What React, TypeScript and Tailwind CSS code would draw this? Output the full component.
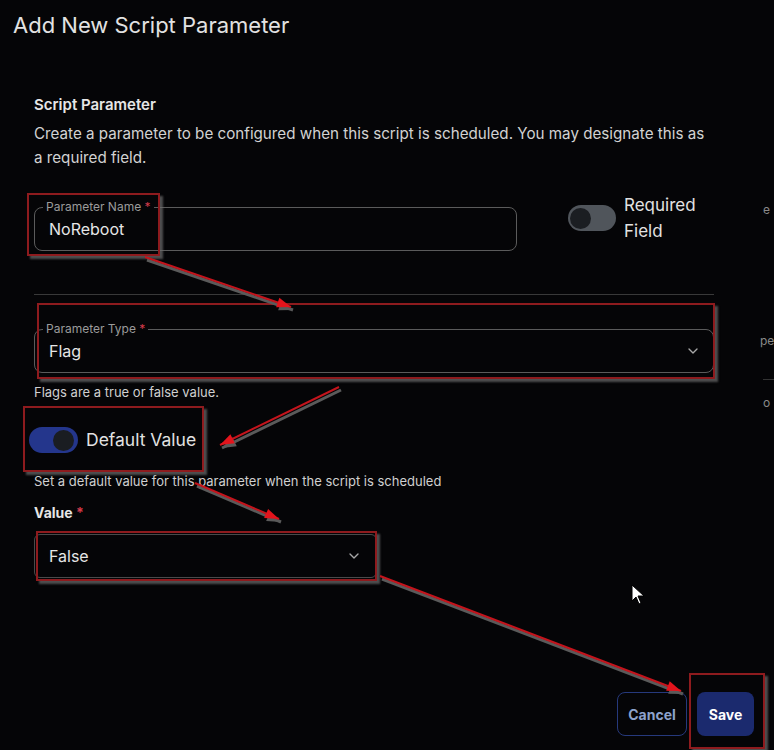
import { ChevronDown } from 'lucide-react';

type Pt = [number, number];

// annotation arrows drawn over the form: [tail, tip]
const ARROWS: [Pt, Pt][] = [
  [[145, 257], [291, 307]],
  [[339, 387], [220, 445]],
  [[195, 483], [279, 519]],
  [[380, 576], [681, 691]],
];

// annotation boxes: x, y, w, h
const BOXES = [
  { x: 27, y: 193, w: 133, h: 63 },
  { x: 37, y: 303, w: 678, h: 76 },
  { x: 23, y: 406, w: 181, h: 66 },
  { x: 36, y: 531, w: 341, h: 50 },
  { x: 689, y: 673, w: 76, h: 76 },
];

function head(tail: Pt, tip: Pt, len = 14, half = 5) {
  const dx = tip[0] - tail[0];
  const dy = tip[1] - tail[1];
  const d = Math.hypot(dx, dy);
  const ux = dx / d;
  const uy = dy / d;
  const bx = tip[0] - ux * len;
  const by = tip[1] - uy * len;
  return `${tip[0]},${tip[1]} ${bx - uy * half},${by + ux * half} ${bx + uy * half},${by - ux * half}`;
}

function Annotations() {
  return (
    <>
      {BOXES.map((b, i) => (
        <div
          key={i}
          className="pointer-events-none absolute border-2 border-[#8e1b1e] shadow-[3px_3px_2px_rgba(110,110,110,0.7)]"
          style={{ left: b.x, top: b.y, width: b.w, height: b.h }}
        />
      ))}
      <svg className="pointer-events-none absolute left-0 top-0" width={774} height={750}>
        {ARROWS.map(([a, b], i) => (
          <g key={i}>
            <line x1={a[0] + 2} y1={a[1] + 3} x2={b[0] + 2} y2={b[1] + 3} stroke="#5a5a5a" strokeWidth={3} />
            <polygon points={head([a[0] + 2, a[1] + 3], [b[0] + 2, b[1] + 3])} fill="#5a5a5a" />
            <line x1={a[0]} y1={a[1]} x2={b[0]} y2={b[1]} stroke="#c4141c" strokeWidth={2} />
            <polygon points={head(a, b)} fill="#e3141c" />
          </g>
        ))}
        {/* mouse pointer */}
        <path d="M632 585 L632 601 L636 597 L639 604 L641 603 L638 596 L644 596 Z" fill="#fff" stroke="#000" strokeWidth={1} />
      </svg>
    </>
  );
}

function OutlinedField({ label, value, width, select }: { label: string; value: string; width: string; select?: boolean }) {
  return (
    <div className={`relative h-[44px] ${width} rounded-lg border border-[#5b5b5b] flex items-center pl-[14px] pr-[12px]`}>
      <span className="absolute -top-[9px] left-[8px] bg-[#050507] px-[3px] text-[12px] leading-[16px] text-[#9b9b9b]">
        {label} <span className="text-[#d33a4a]">*</span>
      </span>
      <span className="flex-1 text-[16px] text-[#e6e6e6]">{value}</span>
      {select && <ChevronDown size={16} strokeWidth={2} className="text-[#a8a8a8]" />}
    </div>
  );
}

export default function App() {
  return (
    <div className="relative min-h-[750px] w-[774px] overflow-hidden bg-[#050507] font-['Inter',sans-serif] text-[#d6d6d6]">
      <div className="flex h-[50px] items-center px-[13px] text-[22px] text-[#e2e2e2]">Add New Script Parameter</div>

      <div className="ml-[34px] w-[680px]">
        <div className="mt-[45px] text-[15px] font-semibold leading-[20px] text-[#e6e6e6]">Script Parameter</div>
        <p className="mt-[7px] w-[679px] text-[15.2px] leading-[24px] text-[#d2d2d2]">
          Create a parameter to be configured when this script is scheduled. You may designate this as a required field.
        </p>

        <div className="mt-[22px] flex items-start">
          <div className="mt-[15px]">
            <OutlinedField label="Parameter Name" value="NoReboot" width="w-[483px]" />
          </div>
          <div className="ml-[51px] flex items-start gap-[8px]">
            <div className="mt-[13px] flex h-[26px] w-[48px] items-center rounded-full bg-[#50555b] px-[2px]">
              <div className="h-[21px] w-[21px] rounded-full bg-[#1b1e22]" />
            </div>
            <div className="text-[17px] leading-[26px] text-[#e2e2e2]">
              Required
              <br />
              Field
            </div>
          </div>
        </div>

        <div className="mt-[43px] border-t border-[#393939]" />

        <div className="mt-[34px]">
          <OutlinedField label="Parameter Type" value="Flag" width="w-[680px]" select />
        </div>
        <div className="mt-[10px] text-[13px] leading-[18px] text-[#d0d0d0]">Flags are a true or false value.</div>

        <div className="mt-[26px] flex items-center gap-[8px] -ml-[5px]">
          <div className="flex h-[26px] w-[49px] items-center justify-end rounded-full bg-[#24368c] px-[4px]">
            <div className="h-[21px] w-[21px] rounded-full bg-[#1a1d22]" />
          </div>
          <span className="text-[17.5px] text-[#e2e2e2]">Default Value</span>
        </div>

        <div className="mt-[19px] text-[13px] leading-[18px] text-[#d0d0d0]">
          Set a default value for this parameter when the script is scheduled
        </div>
        <div className="mt-[13px] text-[14px] font-bold leading-[20px] text-[#e6e6e6]">
          Value <span className="text-[#d33a4a]">*</span>
        </div>
        <div className="mt-[11px] flex h-[44px] w-[343px] items-center rounded-md border border-[#4a4a4a] pl-[14px] pr-[14px]">
          <span className="flex-1 text-[16px] text-[#e6e6e6]">False</span>
          <ChevronDown size={16} strokeWidth={2} className="text-[#a8a8a8]" />
        </div>
      </div>

      <div className="mt-[114px] flex justify-end gap-[10px] pr-[20px]">
        <button className="h-[44px] w-[70px] rounded-lg border border-[#26397c] text-[14px] font-bold text-[#8da2cc]">Cancel</button>
        <button className="h-[44px] w-[57px] rounded-lg bg-[#1b2a6e] text-[14px] font-bold text-white">Save</button>
      </div>

      {/* background page peeking at the right edge */}
      <span className="absolute left-[763px] top-[201px] text-[12px] text-[#8a8a8a]">e</span>
      <span className="absolute left-[760px] top-[332px] text-[12px] text-[#8a8a8a]">pe</span>
      <div className="absolute left-[763px] top-[379px] w-[12px] border-t border-[#333]" />
      <span className="absolute left-[763px] top-[394px] text-[12px] text-[#8a8a8a]">o</span>

      <Annotations />
    </div>
  );
}
